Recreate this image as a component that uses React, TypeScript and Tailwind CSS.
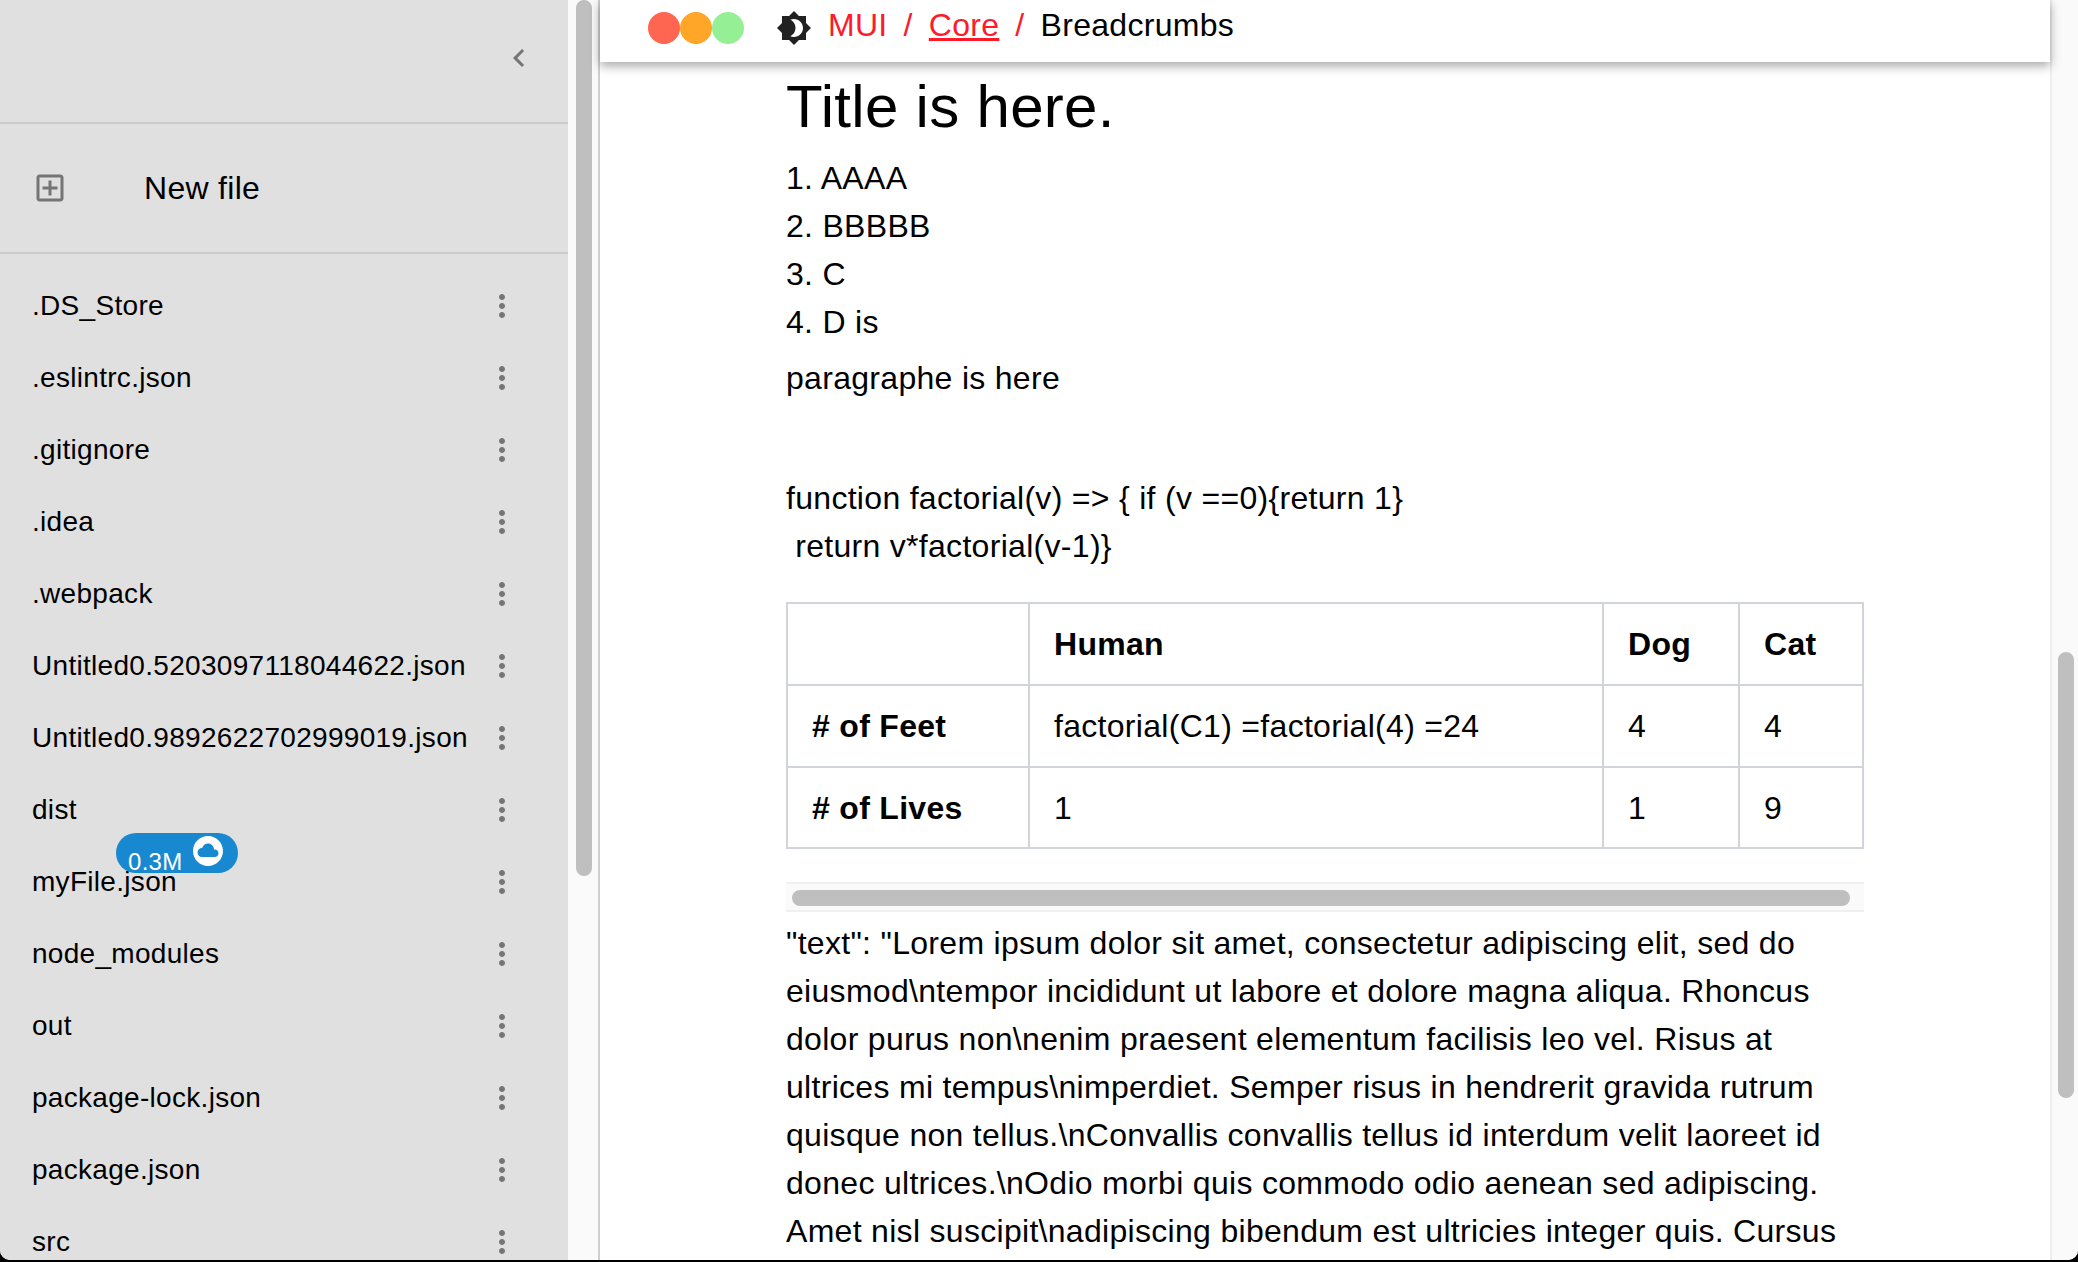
const MORE_VERT =
  "M12 8c1.1 0 2-.9 2-2s-.9-2-2-2-2 .9-2 2 .9 2 2 2zm0 2c-1.1 0-2 .9-2 2s.9 2 2 2 2-.9 2-2-.9-2-2-2zm0 6c-1.1 0-2 .9-2 2s.9 2 2 2 2-.9 2-2-.9-2-2-2z";
const CHEVRON_LEFT = "M15.41 7.41 14 6l-6 6 6 6 1.41-1.41L10.83 12z";
const ADD_BOX =
  "M19 3H5c-1.11 0-2 .9-2 2v14c0 1.1.89 2 2 2h14c1.1 0 2-.9 2-2V5c0-1.1-.9-2-2-2zm0 16H5V5h14v14zm-8-2h2v-4h4v-2h-4V7h-2v4H7v2h4z";
const BRIGHTNESS =
  "M20 8.69V4h-4.69L12 .69 8.69 4H4v4.69L.69 12 4 15.31V20h4.69L12 23.31 15.31 20H20v-4.69L23.31 12 20 8.69zM12 18c-.89 0-1.74-.2-2.5-.55C11.56 16.5 13 14.42 13 12s-1.44-4.5-3.5-5.45C10.26 6.2 11.11 6 12 6c3.31 0 6 2.69 6 6s-2.69 6-6 6z";
const CLOUD_CIRCLE =
  "M12 2C6.48 2 2 6.48 2 12s4.48 10 10 10 10-4.48 10-10S17.52 2 12 2zm4.5 14H8c-1.66 0-3-1.34-3-3s1.34-3 3-3l.14.01C8.58 8.28 10.13 7 12 7c2.21 0 4 1.79 4 4h.5c1.38 0 2.5 1.12 2.5 2.5S17.88 16 16.5 16z";

const files = [
  ".DS_Store",
  ".eslintrc.json",
  ".gitignore",
  ".idea",
  ".webpack",
  "Untitled0.5203097118044622.json",
  "Untitled0.9892622702999019.json",
  "dist",
  "myFile.json",
  "node_modules",
  "out",
  "package-lock.json",
  "package.json",
  "src",
];

function Icon({ d, className }: { d: string; className: string }) {
  return (
    <svg viewBox="0 0 24 24" fill="currentColor" className={className}>
      <path d={d} />
    </svg>
  );
}

function FileRow({ name }: { name: string }) {
  return (
    <li className="relative flex h-[72px] shrink-0 items-center justify-between pl-8 pr-[48px] text-[28px] text-black">
      <span>{name}</span>
      <Icon d={MORE_VERT} className="h-9 w-9 text-[#757575]" />
      {name === "myFile.json" && (
        <div className="absolute left-[116px] top-[-13px] h-[40px] w-[122px] rounded-full bg-[#1889d0] text-white">
          <span className="absolute left-[12px] top-[15px] text-[24px] leading-[28px]">0.3M</span>
          <Icon d={CLOUD_CIRCLE} className="absolute left-[74px] top-0 h-9 w-9" />
        </div>
      )}
    </li>
  );
}

function Sidebar() {
  return (
    <aside className="flex h-full w-[600px] shrink-0">
      <div className="flex h-full w-[568px] shrink-0 flex-col overflow-hidden bg-[#e0e0e0]">
        <div className="flex h-[122px] shrink-0 items-start justify-end pr-[31px] pt-[40px]">
          <Icon d={CHEVRON_LEFT} className="h-9 w-9 text-[#757575]" />
        </div>
        <div className="h-[2px] shrink-0 bg-[#cbcbcb]" />
        <div className="flex h-[128px] shrink-0 items-center pl-[32px]">
          <Icon d={ADD_BOX} className="h-9 w-9 text-[#757575]" />
          <span className="ml-[76px] text-[32px] text-black">New file</span>
        </div>
        <div className="h-[2px] shrink-0 bg-[#cbcbcb]" />
        <ul className="flex flex-col pt-4">
          {files.map((name) => (
            <FileRow key={name} name={name} />
          ))}
        </ul>
      </div>
      <div className="h-full w-[32px] shrink-0 border-r-2 border-[#cfcfcf] bg-[#fafafa] pl-2">
        <div className="h-[876px] w-4 rounded-full bg-[#bfbfbf]" />
      </div>
    </aside>
  );
}

function TopBar() {
  return (
    <header className="z-10 flex h-[62px] shrink-0 items-start bg-white pl-[48px] shadow-[0_4px_10px_rgba(0,0,0,0.35)]">
      <div className="mt-3 flex">
        <div className="h-8 w-8 rounded-full bg-[#ff6651]" />
        <div className="h-8 w-8 rounded-full bg-[#ffa528]" />
        <div className="h-8 w-8 rounded-full bg-[#95ef95]" />
      </div>
      <Icon d={BRIGHTNESS} className="ml-[32px] mt-[10px] h-9 w-9 text-[#212121]" />
      <nav className="ml-4 flex gap-4 text-[32px] leading-[50px] text-[#ff1a2a]">
        <span>MUI</span>
        <span>/</span>
        <span className="underline decoration-[3px]">Core</span>
        <span>/</span>
        <span className="text-black">Breadcrumbs</span>
      </nav>
    </header>
  );
}

const headCell = "border-2 border-[#d1d5db] px-6 text-left font-bold";
const bodyCell = "border-2 border-[#d1d5db] px-6 text-left font-normal";

function AnimalTable() {
  return (
    <table className="w-full table-fixed border-collapse text-[32px]">
      <colgroup>
        <col className="w-[242px]" />
        <col className="w-[574px]" />
        <col className="w-[136px]" />
        <col />
      </colgroup>
      <tbody>
        <tr className="h-[82px]">
          <th className={headCell} />
          <th className={headCell}>Human</th>
          <th className={headCell}>Dog</th>
          <th className={headCell}>Cat</th>
        </tr>
        <tr className="h-[82px]">
          <th className={headCell}># of Feet</th>
          <td className={bodyCell}>factorial(C1) =factorial(4) =24</td>
          <td className={bodyCell}>4</td>
          <td className={bodyCell}>4</td>
        </tr>
        <tr className="h-[81px]">
          <th className={headCell}># of Lives</th>
          <td className={bodyCell}>1</td>
          <td className={bodyCell}>1</td>
          <td className={bodyCell}>9</td>
        </tr>
      </tbody>
    </table>
  );
}

function Article() {
  return (
    <div className="min-h-0 flex-1 overflow-hidden">
      <article className="ml-[186px] w-[1078px] text-[32px] leading-[48px] text-black">
        <h1 className="mt-[5px] text-[60px] leading-[80px]">Title is here.</h1>
        <ol className="mt-[7px]">
          <li>1. AAAA</li>
          <li>2. BBBBB</li>
          <li>3. C</li>
          <li>4. D is</li>
        </ol>
        <p className="mt-[8px]">paragraphe is here</p>
        <p className="mt-[72px]">
          function factorial(v) =&gt; {"{"} if (v ==0){"{"}return 1{"}"}
        </p>
        <p>&nbsp;return v*factorial(v-1){"}"}</p>
        <div className="mt-[32px]">
          <AnimalTable />
        </div>
        <div className="mt-[33px] h-[30px] border-y-2 border-[#f0f0f0] bg-[#fafafa] px-[6px] pt-[6px]">
          <div className="h-4 w-[1058px] rounded-full bg-[#bfbfbf]" />
        </div>
        <p className="mt-[7px]">
          "text": "Lorem ipsum dolor sit amet, consectetur adipiscing elit, sed do eiusmod\ntempor incididunt ut
          labore et dolore magna aliqua. Rhoncus dolor purus non\nenim praesent elementum facilisis leo vel. Risus at
          ultrices mi tempus\nimperdiet. Semper risus in hendrerit gravida rutrum quisque non tellus.\nConvallis
          convallis tellus id interdum velit laoreet id donec ultrices.\nOdio morbi quis commodo odio aenean sed
          adipiscing. Amet nisl suscipit\nadipiscing bibendum est ultricies integer quis. Cursus
        </p>
      </article>
    </div>
  );
}

export default function App() {
  return (
    <div className="h-screen w-full overflow-hidden bg-black font-['Liberation_Sans',Arial,sans-serif] tracking-[0.3px]">
      <div className="flex h-[1260px] w-full overflow-hidden rounded-b-[10px] bg-white">
        <Sidebar />
        <main className="flex h-full min-w-0 flex-1 flex-col">
          <TopBar />
          <Article />
        </main>
        <div className="h-full w-[28px] shrink-0 border-l-2 border-[#eeeeee] bg-[#fafafa] pl-[6px]">
          <div className="mt-[652px] h-[446px] w-4 rounded-full bg-[#bfbfbf]" />
        </div>
      </div>
    </div>
  );
}
